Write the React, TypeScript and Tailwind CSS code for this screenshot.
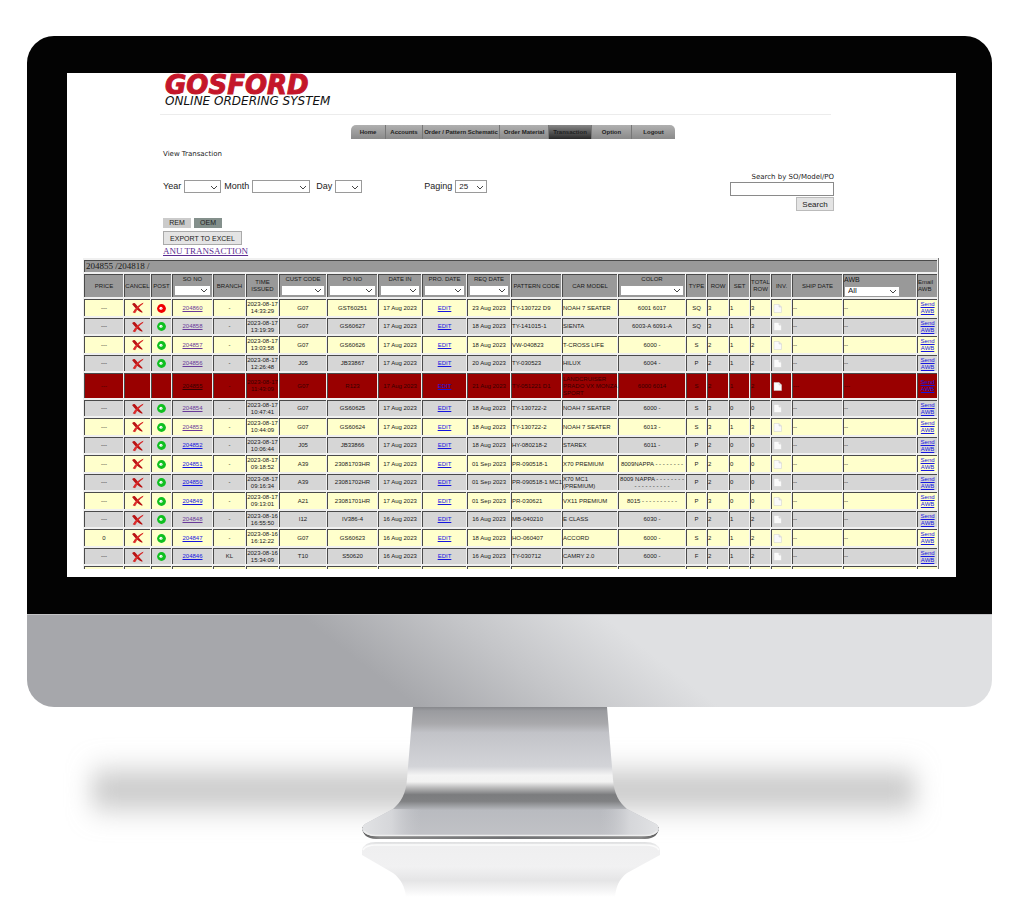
import React from "react";

const SANS = "font-['Liberation_Sans',sans-serif]";
const WIDE = "font-['DejaVu_Sans',sans-serif]";
const SERIF = "font-['Liberation_Serif',serif]";

type Row = {
  so: string;
  tone: "visited" | "link" | "plain";
  time: string;
  cust: string;
  po: string;
  dateIn: string;
  req: string;
  pattern: string;
  car: string;
  color: string;
  type: string;
  n: [string, string, string];
  price?: string;
  branch?: string;
  held?: boolean;
  stopped?: boolean;
};

const rows: Row[] = [
  { so: "204860", tone: "visited", time: "2023-08-17 14:33:29", cust: "G07", po: "GST60251", dateIn: "17 Aug 2023", req: "23 Aug 2023", pattern: "TY-130722 D9", car: "NOAH 7 SEATER", color: "6001 6017", type: "SQ", n: ["3", "1", "3"], held: true },
  { so: "204858", tone: "visited", time: "2023-08-17 13:19:39", cust: "G07", po: "GS60627", dateIn: "17 Aug 2023", req: "18 Aug 2023", pattern: "TY-141015-1", car: "SIENTA", color: "6003-A 6091-A", type: "SQ", n: ["3", "1", "3"] },
  { so: "204857", tone: "visited", time: "2023-08-17 13:03:58", cust: "G07", po: "GS60626", dateIn: "17 Aug 2023", req: "18 Aug 2023", pattern: "VW-040823", car: "T-CROSS LIFE", color: "6000 -", type: "S", n: ["2", "1", "2"] },
  { so: "204856", tone: "visited", time: "2023-08-17 12:26:48", cust: "J05", po: "JB33867", dateIn: "17 Aug 2023", req: "20 Aug 2023", pattern: "TY-030523", car: "HILUX", color: "6004 -", type: "P", n: ["2", "1", "2"] },
  { so: "204855", tone: "plain", time: "2023-08-17 11:43:09", cust: "G07", po: "R123", dateIn: "17 Aug 2023", req: "21 Aug 2023", pattern: "TY-051221 D1", car: "LANDCRUISER\nPRADO VX MONZA\nSPORT", color: "6000 6014", type: "S", n: ["2", "1", "2"], stopped: true },
  { so: "204854", tone: "visited", time: "2023-08-17 10:47:41", cust: "G07", po: "GS60625", dateIn: "17 Aug 2023", req: "18 Aug 2023", pattern: "TY-130722-2", car: "NOAH 7 SEATER", color: "6000 -", type: "S", n: ["3", "0", "0"] },
  { so: "204853", tone: "visited", time: "2023-08-17 10:44:09", cust: "G07", po: "GS60624", dateIn: "17 Aug 2023", req: "18 Aug 2023", pattern: "TY-130722-2", car: "NOAH 7 SEATER", color: "6013 -", type: "S", n: ["3", "1", "3"] },
  { so: "204852", tone: "link", time: "2023-08-17 10:06:44", cust: "J05", po: "JB33866", dateIn: "17 Aug 2023", req: "18 Aug 2023", pattern: "HY-080218-2", car: "STAREX", color: "6011 -", type: "P", n: ["2", "0", "0"] },
  { so: "204851", tone: "link", time: "2023-08-17 09:18:52", cust: "A39", po: "23081703HR", dateIn: "17 Aug 2023", req: "01 Sep 2023", pattern: "PR-090518-1", car: "X70 PREMIUM", color: "8009NAPPA - - - - - - - -", type: "P", n: ["2", "0", "0"] },
  { so: "204850", tone: "link", time: "2023-08-17 09:16:34", cust: "A39", po: "23081702HR", dateIn: "17 Aug 2023", req: "01 Sep 2023", pattern: "PR-090518-1 MC1", car: "X70 MC1\n(PREMIUM)", color: "8009 NAPPA - - - - - - - - - - - - - - - - - -", type: "P", n: ["2", "0", "0"] },
  { so: "204849", tone: "link", time: "2023-08-17 09:13:01", cust: "A21", po: "23081701HR", dateIn: "17 Aug 2023", req: "01 Sep 2023", pattern: "PR-030621", car: "VX11 PREMIUM", color: "8015 - - - - - - - - - -", type: "P", n: ["3", "0", "0"] },
  { so: "204848", tone: "visited", time: "2023-08-16 16:55:50", cust: "I12", po: "IV386-4", dateIn: "16 Aug 2023", req: "16 Aug 2023", pattern: "MB-040210", car: "E CLASS", color: "6030 -", type: "P", n: ["2", "1", "2"] },
  { so: "204847", tone: "link", time: "2023-08-16 16:12:22", cust: "G07", po: "GS60623", dateIn: "16 Aug 2023", req: "18 Aug 2023", pattern: "HO-060407", car: "ACCORD", color: "6000 -", type: "S", n: ["2", "1", "2"], price: "0" },
  { so: "204846", tone: "link", time: "2023-08-16 15:34:09", cust: "T10", po: "S50620", dateIn: "16 Aug 2023", req: "16 Aug 2023", pattern: "TY-030712", car: "CAMRY 2.0", color: "6000 -", type: "F", n: ["2", "1", "2"], branch: "KL" },
];

const columns = [
  "w-[39px]", "w-[26px]", "w-[20px]", "w-[40px]", "w-[32px]", "w-[32px]", "w-[47px]", "w-[50px]",
  "w-[43px]", "w-[44px]", "w-[43px]", "w-[50px]", "w-[55px]", "w-[67px]", "w-[20px]", "w-[21px]",
  "w-[20px]", "w-[20px]", "w-[20px]", "w-[50px]", "w-[73px]", "w-[20px]",
];

const headings: { label: string; filter?: boolean }[] = [
  { label: "PRICE" }, { label: "CANCEL" }, { label: "POST" }, { label: "SO NO", filter: true },
  { label: "BRANCH" }, { label: "TIME ISSUED" }, { label: "CUST CODE", filter: true },
  { label: "PO NO", filter: true }, { label: "DATE IN", filter: true }, { label: "PRO. DATE", filter: true },
  { label: "REQ DATE", filter: true }, { label: "PATTERN CODE" }, { label: "CAR MODEL" },
  { label: "COLOR", filter: true }, { label: "TYPE" }, { label: "ROW" }, { label: "SET" },
  { label: "TOTAL ROW" }, { label: "INV." }, { label: "SHIP DATE" },
];

const menu = [
  { label: "Home", width: "w-[35px]" },
  { label: "Accounts", width: "w-[37px]" },
  { label: "Order / Pattern Schematic", width: "w-[77px]" },
  { label: "Order Material", width: "w-[49px]" },
  { label: "Transaction", width: "w-[43px]", active: true },
  { label: "Option", width: "w-[40px]" },
  { label: "Logout", width: "w-[43px]" },
];

function Select({ id, label, value = "", className = "" }: { id: string; label?: string; value?: string; className?: string }) {
  return (
    <span className={`relative block ${className}`}>
      <select
        id={id}
        aria-label={label}
        defaultValue={value}
        className="block h-full w-full appearance-none border border-[#9a9a9a] bg-white pl-[3px] text-[8px] leading-none text-[#222] outline-none"
      >
        <option value={value}>{value}</option>
      </select>
      <svg viewBox="0 0 8 5" className="pointer-events-none absolute right-[3px] bottom-[3px] h-[5px] w-[8px]" fill="none" stroke="#444" strokeWidth="1">
        <path d="M1 1 L4 4 L7 1" />
      </svg>
    </span>
  );
}

function CancelIcon() {
  return (
    <svg viewBox="0 0 14 13" className="mx-auto block h-[12px] w-[12px]">
      <path d="M1 2 C2.200 1 3 1.200 4 2.400 C6 5 9 8.500 12 11.500 C8.500 10 4 6 1 2Z" fill="#b81414" stroke="#b81414" strokeWidth="1.300" />
      <path d="M13 1 C8.500 2.500 3.500 7.500 1.500 11.500 L3.600 12 C5.500 8 9 4 13 1Z" fill="#e02c2c" stroke="#d42020" strokeWidth=".9" />
    </svg>
  );
}

function StatusIcon({ held }: { held?: boolean }) {
  return (
    <svg viewBox="0 0 10 10" className="mx-auto block h-[9px] w-[9px]">
      <circle cx="5" cy="5" r="4.900" fill={held ? "#f00000" : "#10c020"} />
      <circle cx="4.400" cy="4.700" r="1.700" fill="#fff" />
      <circle cx="5.600" cy="4.900" r=".8" fill={held ? "#faa" : "#ada"} />
    </svg>
  );
}

function InvoiceIcon() {
  return (
    <svg viewBox="0 0 9 9" className="ml-[1px] block h-[9px] w-[9px]">
      <path d="M1 .5 H6 L8.500 3 V8.500 H1Z" fill="#fafafa" stroke="#d0d0d0" strokeWidth=".5" />
      <path d="M6 .5 V3 H8.500" fill="#e4e4e4" stroke="#c8c8c8" strokeWidth=".5" />
    </svg>
  );
}

function Cell({ children, left }: { children?: React.ReactNode; left?: boolean }) {
  return (
    <td className={`border-t border-l border-[#4a4a4a] p-0 align-middle ${left ? "text-left" : "text-center"}`}>
      {children}
    </td>
  );
}

function TransactionRow({ row, index }: { row: Row; index: number }) {
  const tone = { visited: "text-[#6a3a9a]", link: "text-[#1515e0]", plain: "text-[#350000]" }[row.tone];
  const paint = row.stopped ? "bg-[#990000] text-[#350000]" : index % 2 ? "bg-[#d6d6d6]" : "bg-[#ffffcc]";
  const height = row.stopped ? "h-[25px]" : index % 2 ? "h-[16px]" : "h-[17px]";
  const [day, clock] = row.time.split(" ");
  return (
    <tr className={`${paint} ${height}`}>
      <Cell>{row.price ?? "---"}</Cell>
      <Cell>{!row.stopped && <CancelIcon />}</Cell>
      <Cell>{!row.stopped && <StatusIcon held={row.held} />}</Cell>
      <Cell><a href="#order" className={`underline ${tone}`}>{row.so}</a></Cell>
      <Cell>{row.branch ?? "-"}</Cell>
      <Cell><span className="whitespace-nowrap">{day}<br />{clock}</span></Cell>
      <Cell>{row.cust}</Cell>
      <Cell>{row.po}</Cell>
      <Cell>{row.dateIn}</Cell>
      <Cell><a href="#edit" className="text-[#1515e0] underline">EDIT</a></Cell>
      <Cell>{row.req}</Cell>
      <Cell left><span className="whitespace-nowrap">{row.pattern}</span></Cell>
      <Cell left><span className="whitespace-pre">{row.car}</span></Cell>
      <Cell>{row.color}</Cell>
      <Cell>{row.type}</Cell>
      <Cell left>{row.n[0]}</Cell>
      <Cell left>{row.n[1]}</Cell>
      <Cell left>{row.n[2]}</Cell>
      <Cell left><InvoiceIcon /></Cell>
      <Cell left>{row.stopped ? "---" : "--"}</Cell>
      <Cell left>{row.stopped ? "---" : "--"}</Cell>
      <Cell><a href="#awb" className="text-[#1515e0] underline">Send AWB</a></Cell>
    </tr>
  );
}

function Transactions() {
  const head = "border-t border-l border-[#4a4a4a] bg-[#999] p-0 font-normal";
  return (
    <div className="mr-[17px] ml-[16px] h-[311px] overflow-hidden">
      <table className={`w-full table-fixed border-separate border-spacing-x-[1px] border-spacing-y-[2px] border-r border-[#777] bg-[#f0f0f0] text-[6px] leading-[7px] text-[#1a1a1a] ${SANS}`}>
        <colgroup>
          {columns.map((width, i) => <col key={i} className={width} />)}
        </colgroup>
        <thead>
          <tr className="h-[12px]">
            <th colSpan={22} className={`${head} pl-[1px] text-left text-[9px] leading-[11px] ${SERIF}`}>204855 /204818 /</th>
          </tr>
          <tr className="h-[23px]">
            {headings.map((h) => (
              <th key={h.label} className={head}>
                {h.filter ? <label htmlFor={`filter-${h.label}`}>{h.label}</label> : h.label}
                {h.filter && <Select id={`filter-${h.label}`} className="mx-[1px] mt-[2px] h-[11px]" />}
              </th>
            ))}
            <th className={`${head} text-left`}>
              <label htmlFor="filter-awb" className="text-[7px]">AWB</label>
              <Select id="filter-awb" value="All" className="mt-[2px] h-[11px] w-[56px]" />
            </th>
            <th className={`${head} text-left`}>Email AWB</th>
          </tr>
        </thead>
        <tbody>
          {rows.map((row, i) => <TransactionRow key={row.so} row={row} index={i} />)}
          <tr className="h-[17px] bg-[#ffffcc]">
            {columns.map((_, i) => <Cell key={i} />)}
          </tr>
        </tbody>
      </table>
    </div>
  );
}

function Screen() {
  return (
    <div className={`h-[504px] overflow-hidden bg-white text-[#222] ${SANS}`}>
      <header className="mr-[125px] ml-[93px] h-[42px] border-b border-[#ececec] pl-[5px]">
        <h1 className={`h-[22px] text-[26px] leading-[24px] font-bold text-[#c4162a] italic [-webkit-text-stroke:1px_#c4162a] ${WIDE}`}>GOSFORD</h1>
        <p className={`text-[12px] leading-[12px] whitespace-nowrap text-[#111] italic ${WIDE}`}>ONLINE ORDERING SYSTEM</p>
      </header>
      <nav className="mt-[10px] mr-[281px] ml-[284px] flex h-[14px] overflow-hidden rounded-t-[5px] bg-linear-to-b from-[#b0b0b0] to-[#8a8a8a]">
        {menu.map((item) => (
          <a
            key={item.label}
            href="#menu"
            className={`flex shrink-0 items-center justify-center border-r border-[#777] text-[6px] font-bold whitespace-nowrap text-[#222] last:border-r-0 ${item.width} ${item.active ? "bg-linear-to-b from-[#888] to-[#2a2a2a]" : ""}`}
          >
            {item.label}
          </a>
        ))}
      </nav>
      <div className="mr-[122px] ml-[96px]">
        <h2 className={`mt-[10px] text-[7px] leading-[10px] ${WIDE}`}>View Transaction</h2>
        <form className="mt-[14px] flex h-[45px] justify-between text-[9px] leading-[13px]" onSubmit={(e) => e.preventDefault()}>
          <div className="flex items-start gap-[3px] pt-[7px]">
            <label htmlFor="year">Year</label>
            <Select id="year" className="h-[13px] w-[37px]" />
            <label htmlFor="month">Month</label>
            <Select id="month" className="h-[13px] w-[58px]" />
            <label htmlFor="day" className="ml-[3px]">Day</label>
            <Select id="day" className="h-[13px] w-[27px]" />
            <label htmlFor="paging" className="ml-[59px]">Paging</label>
            <Select id="paging" value="25" className="h-[13px] w-[32px]" />
          </div>
          <div className="flex w-[104px] flex-col items-end">
            <label htmlFor="search" className={`text-[7px] leading-[9px] whitespace-nowrap ${WIDE}`}>Search by SO/Model/PO</label>
            <input id="search" type="text" className="h-[14px] w-full border border-[#8a8a8a] bg-white outline-none" />
            <button type="submit" className="mt-[1px] h-[14px] w-[38px] border border-[#bbb] bg-[#e4e4e4] text-[8px] leading-[11px]">Search</button>
          </div>
        </form>
        <div className="flex gap-[3px] text-[7px] leading-[10px]">
          <button type="button" className="h-[10px] w-[28px] bg-[#cbcbcb]">REM</button>
          <button type="button" className="h-[10px] w-[28px] bg-[#84908c]">OEM</button>
        </div>
        <button type="button" className="mt-[3px] block h-[14px] w-[79px] border border-[#aaa] bg-[#e4e4e4] text-[7px] leading-[11px]">EXPORT TO EXCEL</button>
        <a href="#anu" className={`block h-[13px] text-[9px] leading-[12px] text-[#5c2d91] underline ${SERIF}`}>ANU TRANSACTION</a>
      </div>
      <Transactions />
    </div>
  );
}

function Stand() {
  return (
    <svg viewBox="0 0 1020 192" className="block w-full" aria-hidden="true">
      <defs>
        <filter id="soft" x="-10%" y="-150%" width="120%" height="400%"><feGaussianBlur stdDeviation="12 15" /></filter>
        <linearGradient id="neck" x1="0" y1="0" x2="0" y2="1">
          <stop offset="0" stopColor="#88898d" />
          <stop offset=".03" stopColor="#9a9b9f" />
          <stop offset=".13" stopColor="#a9a9ac" />
          <stop offset=".2" stopColor="#c2c3c8" />
          <stop offset=".46" stopColor="#d3d4d8" />
          <stop offset=".53" stopColor="#f4f4f4" />
          <stop offset=".58" stopColor="#f2f2f2" />
          <stop offset=".63" stopColor="#b5b5b6" />
          <stop offset=".68" stopColor="#7b7c7e" />
          <stop offset=".73" stopColor="#808183" />
          <stop offset=".8" stopColor="#b9bbc0" />
          <stop offset="1" stopColor="#c1c2c6" />
        </linearGradient>
        <linearGradient id="foot" x1="362" x2="659" y1="0" y2="0" gradientUnits="userSpaceOnUse">
          <stop offset="0" stopColor="#e2e3e5" />
          <stop offset=".1" stopColor="#d8d9dc" stopOpacity=".9" />
          <stop offset=".2" stopColor="#c4c5ca" stopOpacity="0" />
          <stop offset=".8" stopColor="#c4c5ca" stopOpacity="0" />
          <stop offset=".9" stopColor="#d8d9dc" stopOpacity=".9" />
          <stop offset="1" stopColor="#e2e3e5" />
        </linearGradient>
        <linearGradient id="edge" x1="0" x2="1" y1="0" y2="0">
          <stop offset="0" stopColor="#555" />
          <stop offset=".06" stopColor="#888" />
          <stop offset=".5" stopColor="#707173" />
          <stop offset=".94" stopColor="#888" />
          <stop offset="1" stopColor="#555" />
        </linearGradient>
        <linearGradient id="mirror" x1="0" y1="0" x2="0" y2="1">
          <stop offset="0" stopColor="#dedfe0" />
          <stop offset=".08" stopColor="#efeff0" />
          <stop offset=".45" stopColor="#f1f1f2" />
          <stop offset=".7" stopColor="#e5e5e6" />
          <stop offset="1" stopColor="#fff" />
        </linearGradient>
      </defs>
      <rect x="92" y="66" width="823" height="34" fill="#c2c2c2" filter="url(#soft)" />
      <path d="M362 120 C362 127 367 132 376 132 H645 C654 132 659 127 659 120Z" fill="url(#edge)" />
      <path d="M413 0 H607 L613 72 C614 87 619 95 627 102 L656 117 Q659 119 659 122 Q657 129 645 129 H376 Q364 129 362 122 Q362 119 365 117 L393 102 C401 95 406 87 407 72Z" fill="url(#neck)" />
      <path d="M393 102 H627 L656 117 Q659 119 659 122 Q657 129 645 129 H376 Q364 129 362 122 Q362 119 365 117Z" fill="url(#foot)" />
      <path d="M364 124 Q368 128.500 376 128.500 H645 Q653 128.500 657 124" fill="none" stroke="#eee" strokeWidth="1.500" />
      <path d="M362 143 Q364 135 376 135 H645 Q658 135 660 143 V148 L627 166 C619 172 616 180 615 190 H406 C405 180 401 172 393 166 L362 148Z" fill="url(#mirror)" />
      <path d="M363 143 Q366 138 376 138 H645 Q656 138 659 143" fill="none" stroke="#fbfbfb" strokeWidth="1.500" />
    </svg>
  );
}

export default function App() {
  return (
    <main className="mx-auto w-full max-w-[1020px] bg-white pt-[36px]">
      <div className="mr-[28px] ml-[27px]">
        <div className="rounded-t-[27px] bg-[#030303] py-[37px] pr-[36px] pl-[40px]">
          <Screen />
        </div>
        <div className="h-[93px] rounded-b-[27px] border-t border-[#c4c4c6] bg-[linear-gradient(38deg,#a6a7ab_36%,#c4c5c8_50%,#dfe0e2_64%)]" />
      </div>
      <Stand />
    </main>
  );
}
